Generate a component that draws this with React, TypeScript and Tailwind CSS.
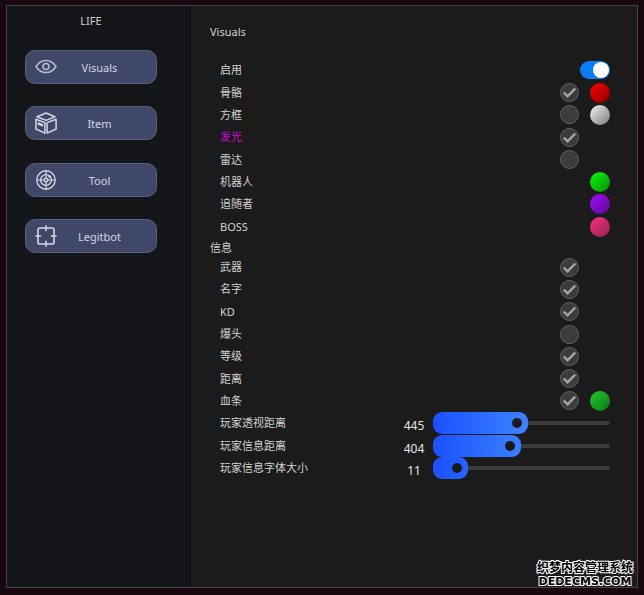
import { useState } from "react";
import type { ReactNode } from "react";
import clsx from "clsx";

interface Option {
  id: string;
  label: string;
  checked?: boolean;
  swatch?: string;
  highlight?: boolean;
}

interface SliderOption {
  id: string;
  label: string;
  value: number;
  max: number;
}

const drawOptions: Option[] = [
  {
    id: "bones",
    label: "骨骼",
    checked: true,
    swatch: "from-[#ff0000] to-[#8c0000]",
  },
  {
    id: "box",
    label: "方框",
    checked: false,
    swatch: "from-[#f4f4f4] to-[#7c7c7c]",
  },
  { id: "glow", label: "发光", checked: true, highlight: true },
  { id: "radar", label: "雷达", checked: false },
  { id: "bot", label: "机器人", swatch: "from-[#0aff0a] to-[#088c08]" },
  { id: "follower", label: "追随者", swatch: "from-[#a80aff] to-[#5a0a94]" },
  { id: "boss", label: "BOSS", swatch: "from-[#ff2f86] to-[#94204f]" },
];

const infoOptions: Option[] = [
  { id: "weapon", label: "武器", checked: true },
  { id: "name", label: "名字", checked: true },
  { id: "kd", label: "KD", checked: true },
  { id: "headshot", label: "爆头", checked: false },
  { id: "level", label: "等级", checked: true },
  { id: "distance", label: "距离", checked: true },
  {
    id: "health",
    label: "血条",
    checked: true,
    swatch: "from-[#1fd32b] to-[#0d7316]",
  },
];

const sliders: SliderOption[] = [
  { id: "esp-distance", label: "玩家透视距离", value: 445, max: 920 },
  { id: "info-distance", label: "玩家信息距离", value: 404, max: 920 },
  { id: "font-size", label: "玩家信息字体大小", value: 11, max: 100 },
];

function EyeIcon() {
  return (
    <svg viewBox="0 0 22 22" className="size-[22px] text-[#b9bdd0]" fill="none" stroke="currentColor" strokeWidth="1.5">
      <path d="M1 10.5C3.5 6.6 7 4.400 11 4.400s7.500 2.200 10 6.100c-2.500 3.900-6 6.100-10 6.100S3.500 14.400 1 10.500Z" />
      <circle cx="11" cy="10.500" r="3" />
    </svg>
  );
}

function BoxIcon() {
  return (
    <svg
      viewBox="0 0 22 22"
      className="size-[22px]"
      fill="none"
      stroke="currentColor"
      strokeWidth="1.5"
      strokeLinejoin="round"
      strokeLinecap="round"
    >
      <path d="M11 1 20 4.800 11 8.400 2 4.800Z" />
      <path d="M.9 7.200v9.800l9 4.100V10.600Z" />
      <path d="M21.100 7.200v9.800l-9 4.100V10.600Z" />
      <path d="m3.500 11.600 3.600 1.600" strokeWidth="2.400" />
    </svg>
  );
}

function TargetIcon() {
  return (
    <svg viewBox="0 0 22 22" className="size-[22px]" fill="none" stroke="currentColor" strokeWidth="1.4">
      <circle cx="11" cy="11" r="9.200" />
      <circle cx="11" cy="11" r="5.400" />
      <circle cx="11" cy="11" r="1.800" />
      <path d="M11 2v7M11 13v7M2 11h7M13 11h7" strokeWidth="1.200" />
      <circle cx="14.500" cy="7.500" r="1.300" fill="currentColor" stroke="none" />
    </svg>
  );
}

function CrosshairIcon() {
  return (
    <svg
      viewBox="0 0 22 22"
      className="size-[22px]"
      fill="none"
      stroke="currentColor"
      strokeWidth="1.600"
      strokeLinecap="round"
    >
      <rect x="3" y="3" width="16" height="16" rx="1.800" />
      <path d="M11 1v4.600M11 16.400V21M1 11h4.600M16.400 11H21" />
    </svg>
  );
}

const tabs = [
  { name: "Visuals", icon: <EyeIcon /> },
  { name: "Item", icon: <BoxIcon /> },
  { name: "Tool", icon: <TargetIcon /> },
  { name: "Legitbot", icon: <CrosshairIcon /> },
];

function Row({
  htmlFor,
  label,
  highlight,
  children,
}: {
  htmlFor: string;
  label: string;
  highlight?: boolean;
  children: ReactNode;
}) {
  return (
    <div className="flex items-center pl-[10px]">
      <label htmlFor={htmlFor} className={clsx("flex-1", highlight && "text-[#d400d4]")}>
        {label}
      </label>
      {children}
    </div>
  );
}

function RoundCheckbox({ id, initial }: { id: string; initial: boolean }) {
  const [checked, setChecked] = useState(initial);

  return (
    <span className="grid">
      <input
        id={id}
        type="checkbox"
        checked={checked}
        onChange={() => setChecked(!checked)}
        className="col-start-1 row-start-1 size-[19px] appearance-none rounded-full border border-[#606060] bg-[#3c3c3c]"
      />
      {checked && (
        <svg
          viewBox="0 0 19 19"
          className="pointer-events-none col-start-1 row-start-1 size-[19px] text-[#a6a6a6]"
          fill="none"
          stroke="currentColor"
          strokeWidth="2.4"
        >
          <path d="m3.700 9.500 3.900 3.900 7.700-7.900" />
        </svg>
      )}
    </span>
  );
}

function OptionRow({ option }: { option: Option }) {
  return (
    <Row htmlFor={option.id} label={option.label} highlight={option.highlight}>
      <div className="flex items-center gap-[11px]">
        {option.checked !== undefined && <RoundCheckbox id={option.id} initial={option.checked} />}
        {option.swatch ? (
          <button
            id={option.checked === undefined ? option.id : undefined}
            type="button"
            aria-label={`${option.label} color`}
            className={clsx("size-5 rounded-full bg-linear-to-br", option.swatch)}
          />
        ) : (
          <span className="size-5" />
        )}
      </div>
    </Row>
  );
}

function SliderRow({ option }: { option: SliderOption }) {
  const [value, setValue] = useState(option.value);
  // the fill always keeps room for the knob, so it never gets below 18px
  const fill = 18 + (value / option.max) * 159;

  return (
    <Row htmlFor={option.id} label={option.label}>
      <output htmlFor={option.id} className="w-[38px] pt-[6px] text-center text-xs leading-4 text-[#e6e6e6]">
        {value}
      </output>
      <div className="relative flex h-[22px] w-[177px] items-center">
        <div
          className="flex h-[22px] shrink-0 items-center justify-end rounded-[9px] bg-linear-to-r from-[#1d4fff] to-[#63a5ff] bg-[length:177px_22px] pr-[6px]"
          style={{ width: `${Math.round(fill)}px` }}
        >
          <span className="size-[10px] rounded-full bg-[#1b1b1f]" />
        </div>
        <div className="h-1 flex-1 rounded-r-full bg-[#3c3c3c]" />
        <input
          id={option.id}
          type="range"
          min={0}
          max={option.max}
          value={value}
          onChange={(e) => setValue(Number(e.target.value))}
          className="absolute inset-0 opacity-0"
        />
      </div>
    </Row>
  );
}

export default function App() {
  const [active, setActive] = useState("Visuals");
  const [enabled, setEnabled] = useState(true);

  return (
    <div className="relative flex min-h-screen bg-[#1a060e] px-[6px] pt-[5px] pb-[7px] font-['Noto_Sans','Noto_Sans_CJK_SC',sans-serif] text-[11px] leading-4 text-[#d2d2d2]">
      <div className="flex flex-1 border border-[#434346] bg-[#1b1b1b]">
        <aside className="w-[184px] shrink-0 bg-[#131519] pt-[7px] pr-[34px] pl-[18px]">
          <h1 className="text-center">LIFE</h1>
          <nav className="mt-[21px] flex h-[203px] flex-col justify-between">
            {tabs.map((tab) => (
              <button
                key={tab.name}
                type="button"
                aria-pressed={active === tab.name}
                onClick={() => setActive(tab.name)}
                className="flex h-[34px] w-full items-center rounded-[10px] border border-[#5b6078] bg-[#40486a] pr-[14px] pl-[9px] text-[#d3d6e2]"
              >
                {tab.icon}
                <span className="flex-1 pt-0.5">{tab.name}</span>
              </button>
            ))}
          </nav>
        </aside>

        <main className="flex-1 pt-[18px] pr-[27px] pb-6 pl-[19px]">
          <h2>{active}</h2>

          <section className="mt-[19px] grid h-[179px] auto-rows-fr">
            <Row htmlFor="enabled" label="启用">
              <input
                id="enabled"
                type="checkbox"
                role="switch"
                checked={enabled}
                onChange={() => setEnabled(!enabled)}
                className="h-[18px] w-[30px] appearance-none rounded-full bg-[#3c3c3c] p-px before:block before:size-4 before:rounded-full before:bg-white checked:bg-[#0a7ff5] checked:before:ml-auto"
              />
            </Row>
            {drawOptions.map((option) => (
              <OptionRow key={option.id} option={option} />
            ))}
          </section>

          <h3 className="flex h-[18px] items-end">信息</h3>

          <section className="grid h-[223px] auto-rows-fr">
            {infoOptions.map((option) => (
              <OptionRow key={option.id} option={option} />
            ))}
            {sliders.map((option) => (
              <SliderRow key={option.id} option={option} />
            ))}
          </section>
        </main>
      </div>

      {/* site watermark over the corner of the window */}
      <div className="pointer-events-none absolute right-[11px] bottom-1.5 text-center font-bold text-black [paint-order:stroke_fill] [-webkit-text-stroke:2px_white]">
        <p className="font-['Noto_Sans_CJK_SC',sans-serif] text-xs leading-[15px]">织梦内容管理系统</p>
        <p className="font-['DejaVu_Sans',sans-serif] text-[11px] leading-[15px]">DEDECMS.COM</p>
      </div>
    </div>
  );
}
